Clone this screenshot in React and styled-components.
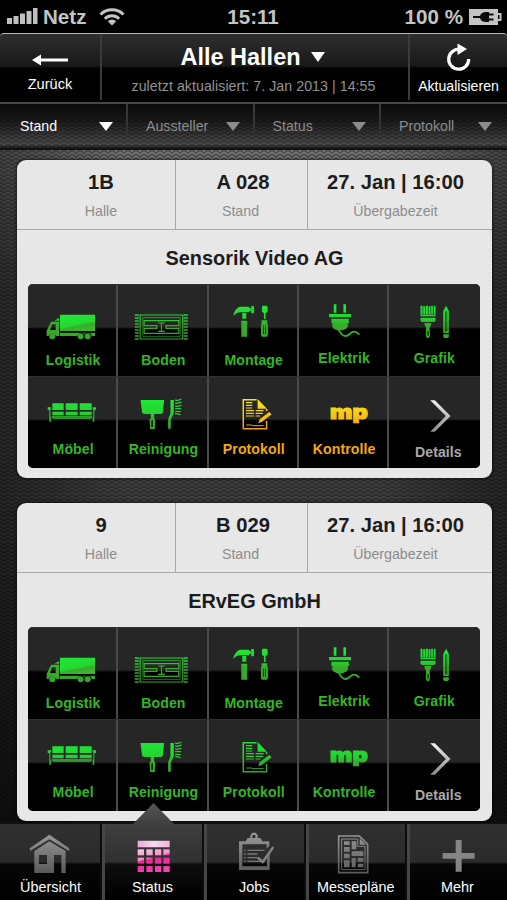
import React from "react";
import styled, { createGlobalStyle, css } from "styled-components";

const GlobalStyle = createGlobalStyle`
  * {
    box-sizing: border-box;
  }
  body {
    margin: 0;
    background: #000;
    font-family: "Liberation Sans", Arial, Helvetica, sans-serif;
  }
`;

const weave =
  "url(\"data:image/svg+xml,%3Csvg xmlns='http://www.w3.org/2000/svg' width='8' height='4'%3E%3Cpath d='M0 0l4 3 4-3M0 4l4 3 4-3M0-4l4 3 4-3' fill='none' stroke='%23000' stroke-opacity='.36' stroke-width='1.5'/%3E%3C/svg%3E\")";

const Screen = styled.div`
  display: flex;
  flex-direction: column;
  width: 507px;
  height: 900px;
  overflow: hidden;
  color: #fff;
  background: #000;
`;

const StatusBar = styled.div`
  flex: none;
  display: grid;
  grid-template-columns: 1fr auto 1fr;
  align-items: center;
  height: 33px;
  padding: 0 5px 0 7px;
  color: #c4c4c4;
  font-size: 20.6px;
  font-weight: bold;
  line-height: 33px;
`;

const StatusTime = styled.span`
  padding-right: 3px;
`;

const StatusGroup = styled.div`
  display: flex;
  align-items: center;
  justify-content: ${(p) => (p.$end ? "flex-end" : "flex-start")};
  gap: ${(p) => p.$gap}px;
`;

const Header = styled.header`
  flex: none;
  display: grid;
  grid-template-columns: 102px 1fr 99px;
  height: 71px;
  border-top: 1.5px solid #b5b5b5;
  border-bottom: 2px solid #484848;
  border-radius: 4px 4px 0 0;
  background: linear-gradient(#2e2e2e, #191919 32px, #020202 34px, #000);
`;

const HeaderButton = styled.div`
  display: flex;
  flex-direction: column;
  align-items: center;
  padding-top: ${(p) => p.$top}px;
  font-size: ${(p) => p.$size}px;
  line-height: 18px;
  margin-bottom: 2px;
  ${(p) =>
    p.$side === "left"
      ? "border-right: 2px solid #3a3a3a;"
      : "border-left: 2px solid #3c3c3c;"}
  svg {
    margin-bottom: ${(p) => p.$gap}px;
  }
`;

const HeaderCenter = styled.div`
  display: flex;
  flex-direction: column;
  align-items: center;
`;

const HeaderTitle = styled.h1`
  display: flex;
  align-items: center;
  gap: 10px;
  margin: 8px 0 0;
  padding-right: 5px;
  font-size: 23.5px;
  line-height: 30px;
`;

const HeaderNote = styled.div`
  margin-top: 4px;
  padding-right: 3px;
  color: #929292;
  font-size: 14.2px;
  letter-spacing: 0.05px;
  line-height: 20px;
  white-space: nowrap;
`;

const Triangle = styled.span`
  width: 0;
  height: 0;
  border: solid transparent;
  border-width: ${(p) => p.$h || 9}px 7px 0;
  border-top-color: ${(p) => p.$color || "#fff"};
`;

const Filters = styled.nav`
  flex: none;
  display: grid;
  grid-template-columns: 126px 126.5px 126.5px 128px;
  height: 46px;
  background: linear-gradient(
      #0a0a0a,
      rgba(10, 10, 10, 0.8) 35%,
      rgba(0, 0, 0, 0.1) 88%,
      rgba(0, 0, 0, 0.7) 96%,
      rgba(0, 0, 0, 0.8)
    ),
    ${weave}, #555;
`;

const Filter = styled.div`
  display: flex;
  justify-content: space-between;
  align-items: flex-start;
  padding: 13px 13px 0 20px;
  color: ${(p) => (p.$active ? "#fff" : "#8c8c8c")};
  font-size: 14.2px;
  line-height: 18px;
  & + & {
    border-left: 2px solid;
    border-image: linear-gradient(#3a3a3a, #333 50%, transparent 75%) 1;
    padding-left: 18px;
  }
  &:last-child {
    padding-right: 15px;
  }
  ${Triangle} {
    margin-top: 5px;
  }
`;

const Content = styled.main`
  flex: 1;
  min-height: 0;
  padding: 10px 15px 0 17px;
  background: linear-gradient(90deg, rgba(0, 0, 0, 0.4), transparent 25%, transparent 75%, rgba(0, 0, 0, 0.4)),
    linear-gradient(transparent, rgba(0, 0, 0, 0.4) 150px, rgba(0, 0, 0, 0.45) 345px, rgba(0, 0, 0, 0.8) 100%),
    ${weave}, #747474;
`;

const Card = styled.section`
  height: 317.5px;
  margin-bottom: 25.5px;
  padding-bottom: 10px;
  border-radius: 9px;
  color: #1c1c1c;
  background: #e7e7e7;
  box-shadow: 0 0 3px 1px rgba(0, 0, 0, 0.55);
`;

const InfoRow = styled.div`
  display: grid;
  grid-template-columns: 158px 132px 1fr;
  height: 70px;
  border-bottom: 1.5px solid #a8a8a8;
`;

const Info = styled.div`
  padding: 9px ${(p) => p.$right || 0}px 0 ${(p) => p.$left || 0}px;
  text-align: center;
  & + & {
    border-left: 1.5px solid #a8a8a8;
  }
`;

const InfoValue = styled.div`
  padding-left: ${(p) => p.$shift || 0}px;
  font-size: 20.2px;
  font-weight: bold;
  line-height: 27px;
`;

const InfoLabel = styled.div`
  margin-top: 6px;
  color: #8c8c8c;
  font-size: 14.2px;
  line-height: 18px;
`;

const Company = styled.h2`
  margin: 0;
  height: 54px;
  font-size: 19.9px;
  line-height: 57px;
  text-align: center;
`;

const Grid = styled.div`
  display: grid;
  grid-template-columns: repeat(5, 1fr);
  grid-template-rows: 92px 91.5px;
  width: 451.5px;
  margin-left: 11px;
  border-radius: 5px;
  overflow: hidden;
  background: #000;
`;

const tones = {
  green: "#35b625",
  amber: "#f5a811",
  grey: "#a9a9a9",
};

const Cell = styled.div`
  display: flex;
  flex-direction: column;
  align-items: center;
  overflow: hidden;
  border-top: 1px solid #303030;
  background: linear-gradient(#262626, #262626 42px, #000 44px);
  color: ${(p) => tones[p.$tone]};
  font-size: 14.1px;
  font-weight: bold;
  letter-spacing: 0.08px;
  line-height: 18px;
  &:not(:nth-child(5n)) {
    box-shadow: inset -2px 0 #4a4a4a;
  }
  svg {
    flex: none;
    margin-top: -1px;
    margin-bottom: ${(p) => p.$gap}px;
  }
`;

const CellLabel = styled.span`
  padding-left: ${(p) => p.$indent || 0}px;
`;

const TabBar = styled.footer`
  flex: none;
  position: relative;
  display: grid;
  grid-template-columns: 102px 102px 101.5px 101.5px 1fr;
  height: 77px;
  border-top: 1px solid #111;
  background: #000;
`;

const Tab = styled.div`
  position: relative;
  display: flex;
  flex-direction: column;
  align-items: center;
  padding-right: 1px;
  font-size: 14.4px;
  line-height: 18px;
  background: linear-gradient(#303030, #2b2b2b 38px, #070707 40px, #000);
  box-shadow: inset -2px 0 #0c0c0c;
  & + & {
    box-shadow: inset 3px 0 #464646, inset -2px 0 #0c0c0c;
  }
  &:last-child {
    box-shadow: inset 3px 0 #464646;
  }
  svg {
    flex: none;
    margin: -1px 0 2px;
  }
  ${(p) =>
    p.$active &&
    css`
      background: linear-gradient(#3e3e3e, #303030 38px, #0e0e0e 40px, #000);
      &::before {
        content: "";
        position: absolute;
        left: 30px;
        top: -21px;
        width: 43px;
        height: 22px;
        background: linear-gradient(#565656, #3e3e3e);
        clip-path: polygon(50% 0, 100% 100%, 0 100%);
      }
    `}
`;

const Shape = ({ box, w = 90, h = 60, children }) => (
  <svg width={w} height={h} viewBox={`${box} ${w * 3} ${h * 3}`}>
    {children}
  </svg>
);

const HiddenSvg = styled.svg`
  position: absolute;
`;

// Shared paint servers, referenced by every icon on the page
const Gradients = () => (
  <HiddenSvg width="0" height="0">
    <defs>
      <linearGradient id="green" gradientUnits="userSpaceOnUse" x1="0" y1="75" x2="0" y2="170">
        <stop offset="0" stopColor="#1fe636" />
        <stop offset=".42" stopColor="#25d331" />
        <stop offset=".62" stopColor="#38ac2b" />
        <stop offset="1" stopColor="#35a629" />
      </linearGradient>
      <linearGradient id="cargo" gradientUnits="userSpaceOnUse" x1="165" y1="104" x2="175" y2="153">
        <stop offset="0" stopColor="#1fe636" />
        <stop offset=".6" stopColor="#25d82f" />
        <stop offset=".72" stopColor="#38ac2b" />
        <stop offset="1" stopColor="#3fb52c" />
      </linearGradient>
      <linearGradient id="amber" gradientUnits="userSpaceOnUse" x1="0" y1="75" x2="0" y2="160">
        <stop offset="0" stopColor="#f3e51c" />
        <stop offset=".45" stopColor="#f7cb18" />
        <stop offset="1" stopColor="#f39c12" />
      </linearGradient>
      <linearGradient id="silver" x1="0" y1="0" x2="0" y2="1">
        <stop offset="0" stopColor="#f2f2f2" />
        <stop offset="1" stopColor="#8b8b8b" />
      </linearGradient>
      <linearGradient id="steel" gradientUnits="userSpaceOnUse" x1="0" y1="135" x2="0" y2="248">
        <stop offset="0" stopColor="#969696" />
        <stop offset="1" stopColor="#5a5a5a" />
      </linearGradient>
      <linearGradient id="pink" gradientUnits="userSpaceOnUse" x1="452" y1="174" x2="470" y2="246">
        <stop offset="0" stopColor="#f9c3e3" />
        <stop offset=".36" stopColor="#f58cc8" />
        <stop offset=".44" stopColor="#ee2394" />
        <stop offset="1" stopColor="#ee45b2" />
      </linearGradient>
      <linearGradient id="blush" x1="0" y1="0" x2="1" y2="0">
        <stop offset="0" stopColor="#e9a9d6" />
        <stop offset=".5" stopColor="#f8d9ee" />
        <stop offset="1" stopColor="#f3b5dc" />
      </linearGradient>
    </defs>
  </HiddenSvg>
);

const Truck = () => (
  <Shape box="24 12">
    <path d="M120 104h105v49H120z" fill="url(#cargo)" />
    <g fill="url(#green)">
      <path d="M119 158h106v10h-10a12 12 0 0 0-22-5 12 12 0 0 0-21 5h-53z" />
      <path d="M103 122l14-8v8zM94 125h23v43h-9a12 12 0 0 0-22 0h-6v-16l10-20zM96 133l-6 17h17v-17z" fillRule="evenodd" />
      <circle cx="97" cy="169" r="9" />
      <circle cx="182" cy="169" r="9" />
      <circle cx="203" cy="169" r="9" />
    </g>
  </Shape>
);

const Carpet = () => (
  <Shape box="294.6 12">
    <g fill="none" stroke="url(#green)" strokeWidth="3.5">
      <path d="M361 105h128v72H361z" />
      <path d="M369 113h112v56H369z" strokeWidth="2" />
      <path d="M373 122h104v15h-38v8h38v15H373v-15h38v-8h-38zM425 129v25M415 129h20M415 154h20" />
      <path d="M351 103v76M498 103v76" strokeWidth="12" strokeDasharray="4 5" />
    </g>
  </Shape>
);

const Tools = () => (
  <Shape box="10.2 12">
    <g fill="url(#green)">
      <path d="M83 108c3-16 9-24 20-28h28v4h5v9h-5v4h-26c-9 0-14 3-22 11zM137 78h8v22h-8zM110 99h12v17h-12zM107 122h18v48h-18z" />
      <path d="M171 77h13l2 5v13l-6 5v17h-5v-17l-6-5V82z" />
      <path d="M168 121h17v8l2 6v30l-3 5h-15l-3-5v-30l2-6zM172 136v26h2v-26zM179 136v26h2v-26z" fillRule="evenodd" />
    </g>
  </Shape>
);

const Plug = () => (
  <Shape box="280.8 12">
    <path
      d="M385 73h8v25h-8zM414 73h8v25h-8zM371 102h66v10h-66zM378 116h53l-2 7h2v7h-4v6h2l-5 9-12 6h-17l-12-6-4-9h2v-6h-3z"
      fill="url(#green)"
    />
    <path d="M399 148c5 8 10 20 21 20 13 0 15-14 27-13 6 0 9 3 15 9" fill="none" stroke="#3aaa2d" strokeWidth="5.5" />
  </Shape>
);

const BrushPencil = () => (
  <Shape box="26.4 12">
    <path d="M121 77h6v27h-6zM129 79h6v25h-6zM137 77h6v27h-6zM145 79h6v25h-6zM153 77h5v27h-5zM161 77h5v27h-5z" fill="url(#green)" />
    <path
      d="M121 105h45v4h-45zM121 113h45v9l-4 4h-37l-4-4zM133 129h20v5l-5 9 2 23-4 8h-6l-4-8 2-23-5-9zM142 153v14h3v-14z"
      fill="url(#green)"
      fillRule="evenodd"
    />
    <path
      d="M198 77l8 16v66h-17V93zM195 94v60h2V94zM199 94v60h2V94zM189 163h17v7l-3 4h-11l-3-4z"
      fill="url(#green)"
      fillRule="evenodd"
    />
  </Shape>
);

const Sofa = () => (
  <Shape box="24 3">
    <path
      d="M97 85h34v20H97zM137 85h36v20h-36zM179 85h36v20h-36zM97 110h34v11H97zM137 110h36v11h-36zM179 110h36v11h-36zM95 124h121v4H95zM99 130h114v2H99z"
      fill="url(#green)"
    />
    <path d="M83 97h10v5h-2v22l2 4v12h-5v-35h-5zM228 97h-10v5h2v22l-2 4v12h5v-35h5z" fill="url(#green)" />
  </Shape>
);

const Dustpan = () => (
  <Shape box="294.6 3">
    <g fill="url(#green)">
      <path
        d="M362 75h71l-4 38-4 4h-22v12l3 6-1 27h-14l-2-27 4-6v-12h-21l-5-4zM395 136v20h4v-20z"
        fillRule="evenodd"
      />
      <path d="M452 75h10v40l-9 19v27h-8v-29l7-17z" />
    </g>
    <path d="M466 75l7 2 12-5M466 84l7 1 12-4M466 93l7 1 12-3M466 101h18M466 109l17 1M466 115l16 4" stroke="#2cc92f" strokeWidth="4" fill="none" />
  </Shape>
);

const Document = ({ tone }) => (
  <Shape box="10.2 3">
    <g fill="none" stroke={`url(#${tone})`} strokeWidth="4.5">
      <path d="M153 74h-40v87h70v-23M183 108v-6" />
      <path d="M121 83h19M121 91h19M121 99h19M121 107h24M121 115h24M121 123h24M150 107h24M150 115h22M150 123h14" strokeWidth="3.500" />
      <path d="M122 150h16l4 2h32" strokeWidth="3" />
    </g>
    <path d="M156 72l28 29h-28zM191 111l7 7-28 22-12 5 4-12z" fill={`url(#${tone})`} />
  </Shape>
);

const MpText = styled.text`
  font-family: Inter, "Liberation Sans", sans-serif;
  font-size: 58px;
  font-weight: 900;
`;

const MpLogo = ({ tone }) => (
  <Shape box="280.8 3">
    <MpText
      x="374"
      y="131"
      textLength="113"
      lengthAdjust="spacingAndGlyphs"
      fill={`url(#${tone})`}
      stroke={`url(#${tone})`}
      strokeWidth="3"
    >
      mp
    </MpText>
  </Shape>
);

const Chevron = () => (
  <Shape box="26.4 288">
    <path d="M150 361h14l47 47-47 47h-14l47-47z" fill="url(#silver)" />
  </Shape>
);

const House = () => (
  <Shape box="0 99" w={101} h={53}>
    <g fill="url(#steel)">
      <path d="M148 134l60 41-1 8-59-35-58 35-1-8z" />
      <path d="M148 154l49 29v66h-13v-54h-22v54h-59v-66zM117 195v27h24v-27z" fillRule="evenodd" />
    </g>
  </Shape>
);

const Calendar = () => (
  <Shape box="306 99" w={101} h={53}>
    <path d="M413 152h96v20h-96z" fill="url(#blush)" />
    {[178, 203, 228].map((y) =>
      [413, 439, 465, 490].map((x) => (
        <rect key={`${x}-${y}`} x={x} y={y} width="19" height="18" fill="url(#pink)" />
      ))
    )}
  </Shape>
);

const Clipboard = () => (
  <Shape box="12 99" w={101} h={53}>
    <path
      d="M117 154h20l6-10h8v-8l6-8h10l6 8v8h8l6 10h21v14l-8 8v-13H127v66h74v-30l8-9v50h-92zM157 135v9h9v-9z"
      fill="url(#steel)"
      fillRule="evenodd"
    />
    <path d="M132 181h5M142 181h52M132 192h5M142 192h30M132 203h5M142 203h30M132 214h5M142 214h52" stroke="#777" strokeWidth="4" />
    <path d="M173 202l15 14 32-45" fill="none" stroke="#858585" strokeWidth="7" />
  </Shape>
);

const FloorPlan = () => (
  <Shape box="318 99" w={101} h={53}>
    <g fill="none" stroke="url(#steel)">
      <path d="M419 138h62l25 25v85h-87z" strokeWidth="5" />
      <path d="M428 147h48v22h22v70h-70z" strokeWidth="3" />
    </g>
    <path
      d="M435 154h17v11h-17zM435 171h17v14h-17zM435 191h17v14h-17zM435 211h17v21h-17zM458 154h14v24h-14zM458 184h35v14h-35zM458 204h12v28h-12zM476 204h17v11h-17zM476 221h17v11h-17zM482 145l19 19h-19z"
      fill="url(#steel)"
    />
  </Shape>
);

const Plus = () => (
  <Shape box="171 279" w={101} h={53}>
    <path d="M317 330h18v39h39v17h-39v39h-18v-39h-39v-17h39z" fill="#858585" />
  </Shape>
);

const Signal = () => (
  <svg width="31" height="17" viewBox="0 0 31 17">
    <path d="M0 10h5v6H0zM6.500 8h5v8h-5zM13 5.500h5V16h-5zM19.500 3h5v13h-5zM26 0h4.500v16H26z" fill="#c0c0c0" />
  </svg>
);

const Wifi = () => (
  <svg width="26" height="19" viewBox="0 0 26 19">
    <g fill="none" stroke="#c4c4c4" strokeWidth="3">
      <path d="M1.500 7.500a16.500 16.500 0 0 1 23 0" />
      <path d="M5.800 11.800a10.300 10.300 0 0 1 14.400 0" />
    </g>
    <path d="M13 18.500l-4.200-4.300a6 6 0 0 1 8.400 0z" fill="#c4c4c4" />
  </svg>
);

const Battery = () => (
  <svg width="34" height="16" viewBox="0 0 34 16">
    <path d="M1 0h29v16H1z" fill="#c4c4c4" />
    <path d="M30 5h2.500v6H30" fill="none" stroke="#c4c4c4" strokeWidth="2" />
    <path d="M5 7h7c1-3 3-4 6-4h3v1.500h4.500v2H21v3h4.500v2H21V13h-3c-3 0-5-1-6-4H5z" fill="#0a0a0a" />
  </svg>
);

const BackArrow = () => (
  <svg width="36" height="12" viewBox="0 0 36 12">
    <path d="M0 6l9-5.500v4h27v3H9v4z" fill="#fff" />
  </svg>
);

const Reload = () => (
  <svg width="26" height="28" viewBox="0 0 26 28">
    <path d="M14 6.300A10 10 0 1 0 22.700 16" fill="none" stroke="#fff" strokeWidth="3.200" />
    <path d="M11.500 0.500l9.500 5.500-9.500 6z" fill="#fff" />
  </svg>
);

const items = (tone) => [
  { label: "Logistik", icon: <Truck />, gap: 7 },
  { label: "Boden", icon: <Carpet />, gap: 7 },
  { label: "Montage", icon: <Tools />, gap: 7 },
  { label: "Elektrik", icon: <Plug />, gap: 5 },
  { label: "Grafik", icon: <BrushPencil />, gap: 5 },
  { label: "Möbel", icon: <Sofa />, gap: 4 },
  { label: "Reinigung", icon: <Dustpan />, gap: 4 },
  { label: "Protokoll", icon: <Document tone={tone} />, gap: 4, tone },
  { label: "Kontrolle", icon: <MpLogo tone={tone} />, gap: 4, tone },
  { label: "Details", icon: <Chevron />, gap: 7, tone: "grey", indent: 8 },
];

const Exhibitor = ({ hall, stand, time, name, tone }) => (
  <Card>
    <InfoRow>
      <Info $left={10}>
        <InfoValue>{hall}</InfoValue>
        <InfoLabel>Halle</InfoLabel>
      </Info>
      <Info $right={2}>
        <InfoValue $shift={5}>{stand}</InfoValue>
        <InfoLabel>Stand</InfoLabel>
      </Info>
      <Info $right={9}>
        <InfoValue>{time}</InfoValue>
        <InfoLabel>Übergabezeit</InfoLabel>
      </Info>
    </InfoRow>
    <Company>{name}</Company>
    <Grid>
      {items(tone).map((item) => (
        <Cell key={item.label} $tone={item.tone || "green"} $gap={item.gap}>
          {item.icon}
          <CellLabel $indent={item.indent}>{item.label}</CellLabel>
        </Cell>
      ))}
    </Grid>
  </Card>
);

const filters = ["Stand", "Aussteller", "Status", "Protokoll"];

const tabs = [
  { label: "Übersicht", icon: <House /> },
  { label: "Status", icon: <Calendar />, active: true },
  { label: "Jobs", icon: <Clipboard /> },
  { label: "Messepläne", icon: <FloorPlan /> },
  { label: "Mehr", icon: <Plus /> },
];

const App = () => (
  <Screen>
    <GlobalStyle />
    <Gradients />
    <StatusBar>
      <StatusGroup $gap={5}>
        <Signal />
        <StatusGroup $gap={13}>
          <span>Netz</span>
          <Wifi />
        </StatusGroup>
      </StatusGroup>
      <StatusTime>15:11</StatusTime>
      <StatusGroup $end $gap={5}>
        <span>100 %</span>
        <Battery />
      </StatusGroup>
    </StatusBar>
    <Header>
      <HeaderButton $side="left" $top={20} $size={14.6} $gap={9}>
        <BackArrow />
        Zurück
      </HeaderButton>
      <HeaderCenter>
        <HeaderTitle>
          Alle Hallen <Triangle $h={10} />
        </HeaderTitle>
        <HeaderNote>zuletzt aktualisiert: 7. Jan 2013 | 14:55</HeaderNote>
      </HeaderCenter>
      <HeaderButton $side="right" $top={9} $size={14.1} $gap={6}>
        <Reload />
        Aktualisieren
      </HeaderButton>
    </Header>
    <Filters>
      {filters.map((name, i) => (
        <Filter key={name} $active={i === 0}>
          {name}
          <Triangle $color={i === 0 ? "#fff" : "#8c8c8c"} />
        </Filter>
      ))}
    </Filters>
    <Content>
      <Exhibitor hall="1B" stand="A 028" time="27. Jan | 16:00" name="Sensorik Video AG" tone="amber" />
      <Exhibitor hall="9" stand="B 029" time="27. Jan | 16:00" name="ERvEG GmbH" tone="green" />
    </Content>
    <TabBar>
      {tabs.map((tab) => (
        <Tab key={tab.label} $active={tab.active}>
          {tab.icon}
          {tab.label}
        </Tab>
      ))}
    </TabBar>
  </Screen>
);

export default App;
